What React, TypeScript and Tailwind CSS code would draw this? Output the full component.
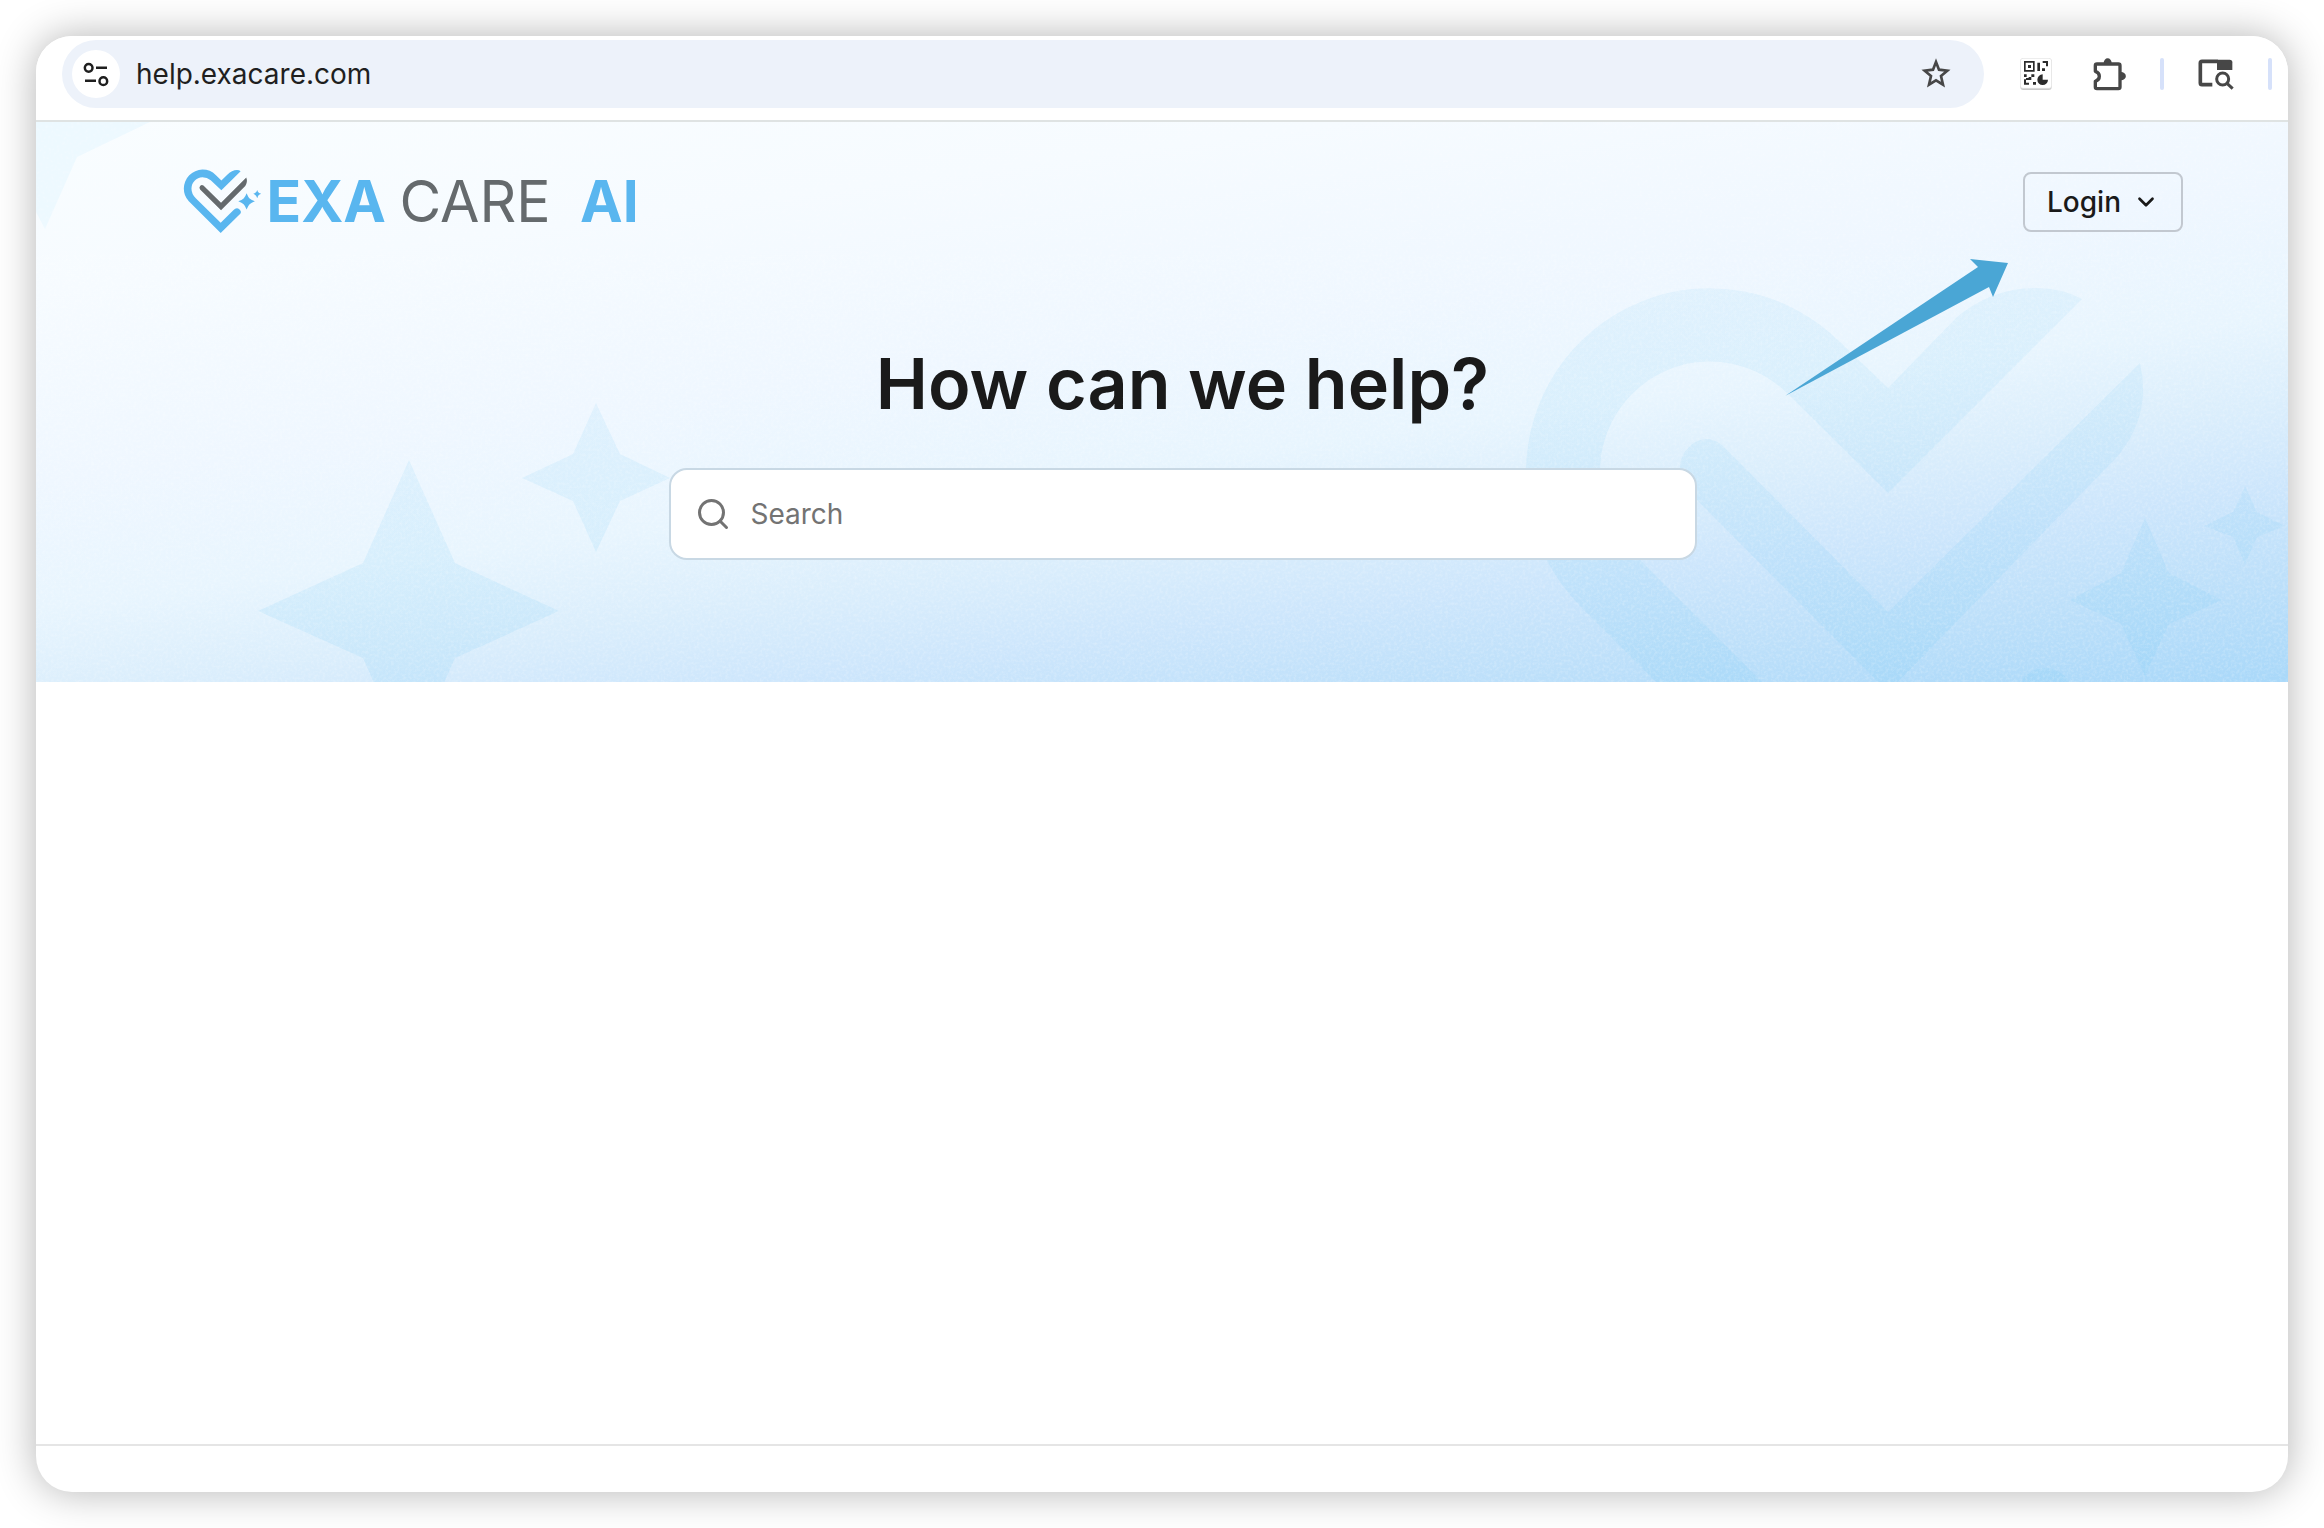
import { ChevronDown, Search } from "lucide-react";

const SPARKLES = [
  "M409 460 455 563 559 611 455 658 409 762 363 658 258 611 363 563Z",
  "M596 403 620 454 670 478 620 501 596 552 573 501 522 478 573 454Z",
  "M2145 518 2169 573 2222 600 2169 624 2145 676 2121 624 2070 600 2121 573Z",
  "M2245 486 2257 512 2285 526 2257 537 2245 564 2233 537 2204 526 2233 512Z",
];

function TuneIcon() {
  return (
    <svg viewBox="249 185 78 74" className="h-[25px] w-[26px]" fill="none" stroke="#1f1f1f" strokeWidth="7.5" aria-hidden="true">
      <circle cx="266" cy="202" r="11.5" />
      <path d="M288 202h33M255 241h33" />
      <circle cx="310" cy="242" r="11.5" />
    </svg>
  );
}

function StarIcon() {
  return (
    <svg viewBox="54 108 108 108" className="size-9" aria-hidden="true">
      <path
        d="M108 126 117 149 142 152 123 168 129 194 108 181 87 194 93 168 74 152 99 149Z"
        fill="none"
        stroke="#474747"
        strokeWidth="8"
      />
    </svg>
  );
}

function QrIcon() {
  return (
    <svg viewBox="360 114 96 96" className="size-8" aria-hidden="true">
      <rect x="361" y="117" width="94" height="93" rx="9" fill="#c9c9c9" />
      <rect x="361" y="115" width="94" height="90" rx="8" fill="#fff" stroke="#dedede" strokeWidth="2" />
      <g fill="#2b2b2b">
        <path fillRule="evenodd" d="M372 123h32v32h-32zM377 128v22h22v-22z" />
        <path d="M384 135h9v9h-9zM412 128h8v25h-8zM428 123h16v16h-6v-10h-10zM426 145h9v8h-9z" />
        <path d="M372 163h8v8h-8zM394 163h9v8h-9zM386 171h8v9h-8zM372 178h6v10h9v6h-15zM378 174h8v6h-8zM399 186h9v8h-9z" />
        <path d="M428 163a16 16 0 1 0 16 16h-16z" />
      </g>
    </svg>
  );
}

function PuzzleIcon() {
  return (
    <svg viewBox="580 107 99 99" className="size-[33px]" aria-hidden="true">
      <path
        d="M587 147V130q0-5 5-5h64q5 0 5 5v64q0 5-5 5h-64q-5 0-5-5v-17C603 172 603 152 587 147Z"
        fill="none"
        stroke="#474747"
        strokeWidth="10"
        strokeLinejoin="round"
      />
      <path d="M612 122a12 14 0 0 1 24 0zM664 149a14 12 0 0 1 0 25z" fill="#474747" />
    </svg>
  );
}

function TabSearchIcon() {
  return (
    <svg viewBox="896 120 108 93" className="h-[31px] w-9" fill="none" stroke="#474747" aria-hidden="true">
      <path d="M955 127h-47q-5 0-5 5v60q0 5 5 5h31" strokeWidth="11" />
      <path d="M953 122h38q8 0 8 8v23h-46z" fill="#474747" stroke="none" />
      <circle cx="970" cy="180" r="18" strokeWidth="9" />
      <path d="m983 193 17 16" strokeWidth="9" />
    </svg>
  );
}

function Logo() {
  return (
    <svg viewBox="66 45 1395 280" className="h-[93px] w-[465px]" role="img" aria-label="ExaCare AI">
      <g fill="#59b6ef">
        <path d="m182 122 17-17q15-15 30-15 7 0 11 4l-58 57-32-30q-11-9-25-9a34 34 0 0 0-33 34q0 17 13 29l75 74 38-38q9-9 18-3 8 7 3 14l-59 58-96-96q-15-15-15-38a57 57 0 0 1 56-57q24 0 40 16Z" />
        <path d="M258 160q5 12 9 16 6 5 16 8-11 4-16 9-5 5-9 16-4-11-9-16-5-5-16-9 11-3 16-8 5-5 9-16Z" />
        <path d="M290 150q2 6 4 8 3 3 8 4-6 2-8 4-2 3-4 9-2-6-5-9-2-2-7-4 5-1 7-4 3-2 5-8Z" />
      </g>
      <path d="m128 137 53 52 76-76q5 13-3 25l-73 73-63-62q-4-6 0-11 5-5 10-1Z" fill="#656a6d" />
      <g className="font-['Inter',sans-serif]" fontSize="172">
        <text x="318" y="246" fontWeight="700" fill="#59b6ef">EXA</text>
        <text x="718" y="246" fontWeight="400" fill="#656a6d">CARE</text>
        <text x="1262" y="246" fontWeight="700" fill="#59b6ef">AI</text>
      </g>
    </svg>
  );
}

function HeroArt() {
  return (
    <svg viewBox="36 122 2252 560" preserveAspectRatio="xMidYMid slice" className="absolute inset-0 size-full" aria-hidden="true">
      <defs>
        <linearGradient id="sky" gradientUnits="userSpaceOnUse" x1="0" y1="127" x2="109" y2="965">
          <stop offset="0" stopColor="#f9fdff" />
          <stop offset="0.2" stopColor="#f6fbff" />
          <stop offset="0.42" stopColor="#eff7ff" />
          <stop offset="0.57" stopColor="#e8f5fe" />
          <stop offset="0.67" stopColor="#dbeefc" />
          <stop offset="0.77" stopColor="#cde6fc" />
          <stop offset="0.87" stopColor="#bee0fa" />
          <stop offset="1" stopColor="#a9d8f9" />
        </linearGradient>
        <linearGradient id="mark" gradientUnits="userSpaceOnUse" x1="0" y1="280" x2="0" y2="682">
          <stop offset="0" stopColor="#8fd2f5" stopOpacity="0.14" />
          <stop offset="1" stopColor="#78cbf5" stopOpacity="0.17" />
        </linearGradient>
        <filter id="grain" x="0" y="0" width="100%" height="100%">
          <feTurbulence type="fractalNoise" baseFrequency="0.35" numOctaves="2" />
          <feColorMatrix values="0 0 0 0 1  0 0 0 0 1  0 0 0 0 1  1.2 0 0 0 -0.5" />
        </filter>
      </defs>
      <rect x="36" y="122" width="2252" height="560" fill="url(#sky)" />
      <path d="M36 122H150L77 157 45 229 36 212Z" fill="#edf9ff" />
      <g fill="url(#mark)">
        <path d="M1888 388 1957 317Q1992 288 2036 288 2062 288 2082 299L1888 493 1788 394A110 110 0 0 0 1600 472Q1600 518 1632 552L1888 808V914L1580 606Q1526 550 1526 472A184 184 0 0 1 1840 342Z" />
        <path d="M1722 445 1888 612 2140 363Q2152 414 2118 456L1888 692 1690 493Q1672 470 1686 450 1703 431 1722 445Z" />
        {SPARKLES.map((d) => (
          <path key={d} d={d} />
        ))}
        <circle cx="2045" cy="696" r="28" />
      </g>
      <rect x="36" y="122" width="2252" height="560" filter="url(#grain)" opacity="0.4" />
    </svg>
  );
}

function PointerArrow() {
  return (
    <svg viewBox="36 122 2252 560" preserveAspectRatio="xMidYMid slice" className="pointer-events-none absolute inset-0 size-full" aria-hidden="true">
      <path d="M1785 396 1978 267 1970 259 2008 263 1993 297 1989 287Z" fill="#4aa6d5" />
    </svg>
  );
}

function BrowserBar() {
  return (
    <header className="flex items-center gap-[34px] border-b-2 border-[#dfe3e3] bg-white pt-1 pr-4 pb-3 pl-[26px]">
      <div className="mr-0.5 flex h-[68px] flex-1 items-center rounded-full bg-[#edf2fa] pr-[30px] pl-[10px]">
        <button aria-label="View site information" className="flex size-12 items-center justify-center rounded-full bg-white">
          <TuneIcon />
        </button>
        <input
          aria-label="Address"
          defaultValue="help.exacare.com"
          className="ml-4 min-w-0 flex-1 bg-transparent text-[28px] text-[#1f1f1f] outline-none"
        />
        <button aria-label="Bookmark this page">
          <StarIcon />
        </button>
      </div>
      <button aria-label="QR code generator">
        <QrIcon />
      </button>
      <button aria-label="Extensions" className="flex w-10 justify-end">
        <PuzzleIcon />
      </button>
      <span className="h-8 w-1 rounded-full bg-[#d6e1fa]" />
      <button aria-label="Search tabs">
        <TabSearchIcon />
      </button>
      <span className="h-8 w-1 rounded-full bg-[#d6e1fa]" />
    </header>
  );
}

export default function App() {
  return (
    <div className="flex min-h-screen flex-col bg-white p-9 font-['Inter','Liberation_Sans',sans-serif]">
      <div className="flex flex-1 flex-col overflow-hidden rounded-[36px] bg-white shadow-[0_0_40px_rgba(0,0,0,0.3)]">
        <BrowserBar />

        <section className="relative pt-[33px] pr-[105px] pb-[122px] pl-[146px]">
          <HeroArt />
          <div className="relative flex items-center justify-between">
            <a href="#home">
              <Logo />
            </a>
            <button className="flex h-[60px] items-center gap-3 rounded-lg border-2 border-[#c2c8d0] px-[22px] text-[28px] font-medium text-[#1a1a1a]">
              Login
              <ChevronDown className="size-[26px]" strokeWidth={2.5} />
            </button>
          </div>

          <div className="relative mx-auto mt-[92px] max-w-[1028px]">
            <h1 className="text-center text-[70px] leading-[88px] font-semibold text-[#1a1a1a]">How can we help?</h1>
            <label className="mt-10 flex h-[92px] items-center gap-5 rounded-[18px] border-2 border-[#c8d8e4] bg-white px-6">
              <Search className="size-9 text-[#737373]" strokeWidth={2} />
              <input
                type="search"
                aria-label="Search"
                placeholder="Search"
                className="min-w-0 flex-1 bg-transparent text-[28px] text-[#1a1a1a] outline-none placeholder:text-[#737373]"
              />
            </label>
          </div>
          <PointerArrow />
        </section>

        <main className="flex-1" />
        <footer className="h-12 border-t-2 border-[#e5e5e5]" />
      </div>
    </div>
  );
}
